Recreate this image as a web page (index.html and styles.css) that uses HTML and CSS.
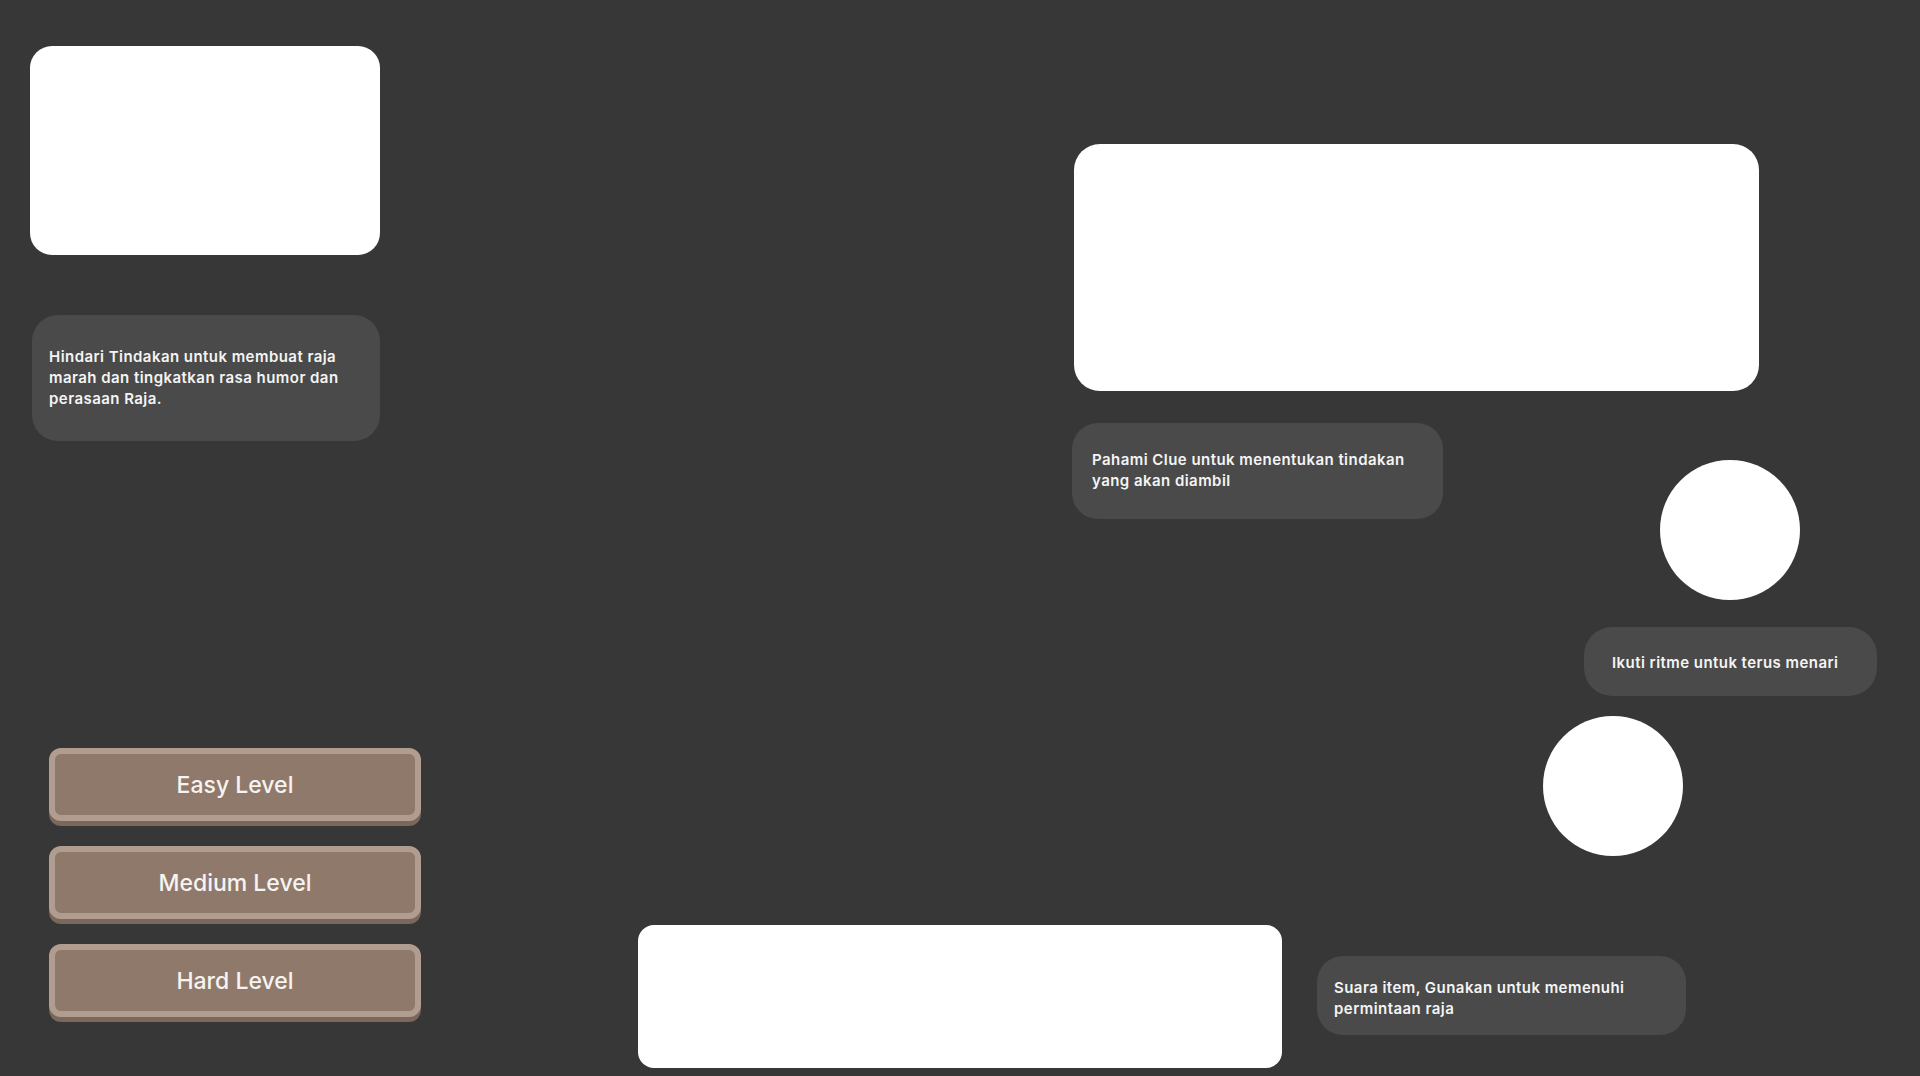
FILE: index.html
```html
<!DOCTYPE html>
<html lang="en">
<head>
    <meta charset="UTF-8">
    <meta name="viewport" content="width=device-width, initial-scale=1.0">
    <title>Tutorial</title>
    <link rel="stylesheet" href="styles.css">
</head>
<body>

<div id="tutorialScreen">
    <div id="sidebar">
        <div class="spot" id="spotStatus"></div> <!-- Raja mood panel -->
        <div class="hint" id="hintMood">Hindari Tindakan untuk membuat raja marah dan tingkatkan rasa humor dan perasaan Raja.</div>

        <div id="levelButtons">
            <button class="levelButton">Easy Level</button>
            <button class="levelButton">Medium Level</button>
            <button class="levelButton">Hard Level</button>
        </div>
    </div>

    <div id="stage">
        <div class="spot" id="spotClue"></div>

        <div class="stageRow" id="rowClue">
            <div class="hint" id="hintClue">Pahami Clue untuk menentukan tindakan yang akan diambil</div>
            <div class="spotCircle" id="circleDance"></div>
        </div>

        <div class="hint" id="hintRhythm">Ikuti ritme untuk terus menari</div>
        <div class="spotCircle" id="circleRhythm"></div>

        <div class="stageRow" id="rowItems">
            <div class="spot" id="spotItems"></div>
            <div class="hint" id="hintItems">Suara item, Gunakan untuk memenuhi permintaan raja</div>
        </div>
    </div>
</div>

</body>
</html>
```

FILE: styles.css
```css
body, html {
    margin: 0;
    padding: 0;
    height: 100%;
    background-color: #373737; /* Dimmed overlay color */
    color: #f4f4f4;
    font-family: Inter, 'Noto Sans', sans-serif;
    overflow: hidden;
}

#tutorialScreen {
    display: flex;
    height: 1076px;
}

#sidebar {
    width: 421px;
    box-sizing: border-box;
    padding: 46px 0 0 30px;
    display: flex;
    flex-direction: column;
}

#stage {
    flex: 1;
    display: flex;
    flex-direction: column;
    align-items: flex-start;
}

.stageRow {
    display: flex;
    align-items: flex-start;
}

/* White cut-outs that highlight game elements */
.spot {
    background-color: #ffffff;
    border-radius: 22px;
}

.spotCircle {
    width: 140px;
    height: 140px;
    border-radius: 50%;
    background-color: #ffffff;
}

.hint {
    box-sizing: border-box;
    background-color: #4a4a4a;
    border-radius: 26px;
    font-size: 15px;
    font-weight: 600;
    letter-spacing: 0.45px;
    line-height: 21px;
}

#spotStatus {
    width: 350px;
    height: 209px;
}

#hintMood {
    width: 348px;
    height: 126px;
    margin: 60px 0 0 2px;
    padding: 31px 10px 0 17px;
}

#levelButtons {
    margin-top: 307px;
    margin-left: 19px;
    display: flex;
    flex-direction: column;
    gap: 25px;
}

.levelButton {
    width: 372px;
    height: 73px;
    border: 6px solid #b19d90;
    border-radius: 12px;
    background-color: #8f796b;
    box-shadow: 0 5px 0 #7b685c;
    color: #f7f3f1;
    font-family: Inter, 'Noto Sans', sans-serif;
    font-size: 23px;
    font-weight: 500;
    cursor: pointer;
}

.levelButton:hover {
    background-color: #9a8376;
}

#spotClue {
    width: 685px;
    height: 247px;
    margin: 144px 0 0 653px;
    border-radius: 26px;
}

#rowClue {
    margin: 32px 0 0 651px;
}

#hintClue {
    width: 371px;
    height: 96px;
    padding: 26px 10px 0 20px;
}

#circleDance {
    margin: 37px 0 0 217px;
}

#hintRhythm {
    width: 293px;
    height: 69px;
    margin: 27px 0 0 1163px;
    padding: 25px 8px 0 28px;
    border-radius: 28px;
}

#circleRhythm {
    margin: 20px 0 0 1122px;
}

#rowItems {
    margin: 69px 0 0 217px;
}

#spotItems {
    width: 644px;
    height: 143px;
    border-radius: 16px;
}

#hintItems {
    width: 369px;
    height: 79px;
    margin: 31px 0 0 35px;
    padding: 21px 8px 0 17px;
}
```
